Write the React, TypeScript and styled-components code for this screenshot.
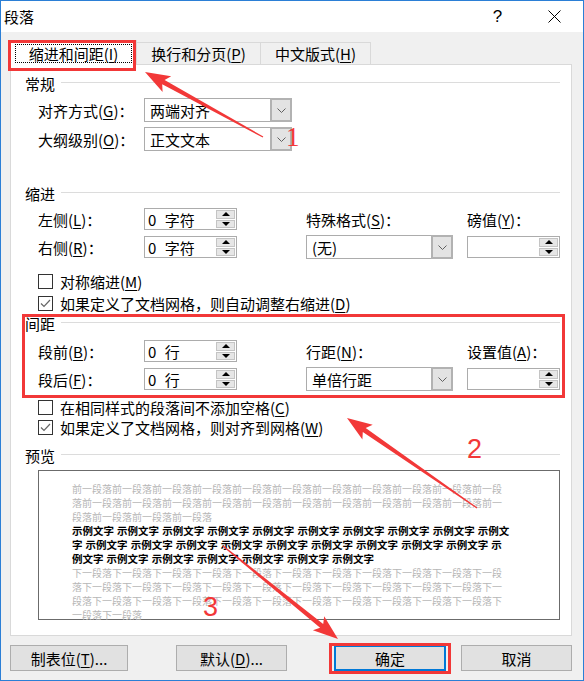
import React from 'react';
import styled, { createGlobalStyle, css } from 'styled-components';

const RED = '#f23838';
const FONT = '"Noto Sans CJK SC", "Liberation Sans", sans-serif';

const GlobalStyle = createGlobalStyle`
  * { box-sizing: border-box; }
  body { margin: 0; background: #fff; font-family: ${FONT}; }
  u { text-decoration: underline; text-underline-offset: 2px; text-decoration-thickness: 1px; }
`;

const Window = styled.div`
  position: relative;
  width: 584px;
  height: 681px;
  border: 1px solid #2b7fd6;
  background: #f0f0f0;
  font-size: 15px;
  line-height: 1;
  color: #000;
  display: flex;
  flex-direction: column;
`;

const TitleBar = styled.div`
  height: 31px;
  flex: none;
  background: #fff;
  display: flex;
  align-items: center;
  padding-left: 3px;
`;

const TitleText = styled.span`
  flex: 1;
`;

const TitleButton = styled.div`
  width: 57px;
  height: 31px;
  display: flex;
  align-items: center;
  justify-content: center;
  font-family: "Liberation Sans", sans-serif;
  font-size: 17px;
`;

const Body = styled.div`
  flex: 1;
  display: flex;
  flex-direction: column;
  padding: 8px 11px 0 9px;
`;

const TabStrip = styled.div`
  height: 24px;
  display: flex;
  align-items: flex-end;
`;

const Tab = styled.div<{ $w: number; $active?: boolean }>`
  position: relative;
  width: ${p => p.$w}px;
  height: 22px;
  display: flex;
  align-items: center;
  justify-content: center;
  border: 1px solid #d9d9d9;
  border-bottom: none;
  background: #f0f0f0;
  margin-left: -1px;

  ${p => p.$active && css`
    margin-left: 0;
    height: 25px;
    margin-bottom: -1px;
    background: #fff;
    z-index: 2;

    &::before {
      content: "";
      position: absolute;
      top: 3px;
      left: 4px;
      right: 4px;
      bottom: 2px;
      border: 1px dotted #000;
    }

    &::after {
      content: "";
      position: absolute;
      top: -1px;
      left: -3px;
      right: 0;
      bottom: -6px;
      border: 3px solid ${RED};
    }
  `}
`;

const Panel = styled.div`
  height: 572px;
  border: 1px solid #d9d9d9;
  background: #fff;
  padding: 9px 11px 0 14px;
  display: flex;
  flex-direction: column;
`;

const Group = styled.div<{ $top?: number; $marked?: boolean }>`
  position: relative;
  margin-top: ${p => p.$top ?? 0}px;

  ${p => p.$marked && css`
    &::after {
      content: "";
      position: absolute;
      top: 0;
      left: -3px;
      right: -5px;
      bottom: -7px;
      border: 3px solid ${RED};
      z-index: 1;
      pointer-events: none;
    }
  `}
`;

const GroupHeader = styled.div`
  height: 18px;
  display: flex;
  align-items: center;
  gap: 6px;

  &::after {
    content: "";
    flex: 1;
    height: 1px;
    margin-top: -2px;
    background: #dcdcdc;
  }
`;

const FieldRows = styled.div`
  margin-top: 6px;
  display: flex;
  flex-direction: column;
  gap: 5px;
`;

const FieldRow = styled.div`
  display: grid;
  grid-template-columns: 106px 148px;
  height: 24px;
  align-items: center;
  padding-left: 13px;
`;

const FieldGrid = styled.div<{ $top: number }>`
  margin-top: ${p => p.$top}px;
  padding-left: 13px;
  display: grid;
  grid-template-columns: 106px 162px 161px 93px;
  grid-template-rows: 22px 24px;
  row-gap: 5px;
  align-items: center;
`;

const Label = styled.span`
  white-space: nowrap;
`;

const ComboBox = styled.div<{ $w: number }>`
  width: ${p => p.$w}px;
  height: 24px;
  display: flex;
  border: 1px solid #acacac;
  background: #fff;
`;

const ComboValue = styled.span`
  flex: 1;
  display: flex;
  align-items: center;
  padding-left: 5px;
`;

const ComboArrow = styled.span`
  width: 22px;
  margin: -1px -1px -1px 0;
  border: 2px solid #b2b2b2;
  background: #e3e3e3;
  display: flex;
  align-items: center;
  justify-content: center;
`;

const SpinBox = styled.div`
  width: 93px;
  height: 22px;
  border: 1px solid #acacac;
  background: #fff;
  display: flex;
  padding: 1px;
`;

const SpinValue = styled.span`
  flex: 1;
  display: flex;
  align-items: center;
  padding-left: 2px;
  word-spacing: 5px;
`;

const SpinButtons = styled.div`
  width: 19px;
  display: flex;
  flex-direction: column;
  gap: 1px;
`;

const SpinButton = styled.div<{ $dir: 'up' | 'down' }>`
  flex: 1;
  background: #e6e6e6;
  border: 1px solid #c4c4c4;
  display: flex;
  align-items: center;
  justify-content: center;

  &::before {
    content: "";
    border-left: 4px solid transparent;
    border-right: 4px solid transparent;
    ${p => p.$dir === 'up'
      ? css`border-bottom: 4px solid #000;`
      : css`border-top: 4px solid #000;`}
  }
`;

const CheckList = styled.div<{ $top: number }>`
  margin-top: ${p => p.$top}px;
  display: flex;
  flex-direction: column;
`;

const CheckRow = styled.div<{ $h: number }>`
  height: ${p => p.$h}px;
  display: flex;
  align-items: center;
  gap: 7px;
  padding-left: 13px;
  white-space: nowrap;
`;

const CheckBox = styled.span`
  width: 15px;
  height: 15px;
  flex: none;
  border: 1px solid #333;
  background: #fff;
  display: flex;
  align-items: center;
  justify-content: center;
`;

const PreviewBox = styled.div`
  margin: 6px 0 0 13px;
  height: 150px;
  border: 1px solid #6b6b6b;
  background: #fff;
  padding: 11px 0 0 33px;
  font-size: 10px;
  line-height: 14px;
`;

const PreviewLine = styled.div<{ $sample?: boolean }>`
  white-space: nowrap;
  height: 14px;
  color: #b6b6b6;

  ${p => p.$sample && css`
    color: #000;
    font-size: 10.5px;
    font-weight: 700;
    word-spacing: 0.7px;
  `}
`;

const Footer = styled.div`
  margin-top: 9px;
  height: 26px;
  display: flex;
`;

const Button = styled.div<{ $w: number; $gap?: number; $default?: boolean }>`
  position: relative;
  width: ${p => p.$w}px;
  margin-left: ${p => p.$gap ?? 0}px;
  display: flex;
  align-items: center;
  justify-content: center;
  background: #e1e1e1;
  border: 1px solid #adadad;
  white-space: nowrap;

  ${p => p.$default && css`
    border-color: #0078d7;
    box-shadow: inset 0 0 0 1px #0078d7;

    &::after {
      content: "";
      position: absolute;
      top: -3px;
      left: -6px;
      right: -6px;
      bottom: -4px;
      border: 3px solid ${RED};
    }
  `}
`;

const Annotations = styled.svg`
  position: absolute;
  top: -1px;
  left: -1px;
  width: 584px;
  height: 681px;
  pointer-events: none;
  z-index: 5;
`;

function arrow(tx: number, ty: number, hx: number, hy: number) {
  const head = 21, barb = 9, neck = 5, tail = 1.2, sweep = 4;
  const dx = hx - tx, dy = hy - ty;
  const len = Math.hypot(dx, dy);
  const ux = dx / len, uy = dy / len;
  const nx = -uy, ny = ux;
  const bx = hx - ux * head, by = hy - uy * head;
  const pts = [
    [tx + nx * tail / 2, ty + ny * tail / 2],
    [bx + nx * neck / 2, by + ny * neck / 2],
    [bx - ux * sweep + nx * barb, by - uy * sweep + ny * barb],
    [hx, hy],
    [bx - ux * sweep - nx * barb, by - uy * sweep - ny * barb],
    [bx - nx * neck / 2, by - ny * neck / 2],
    [tx - nx * tail / 2, ty - ny * tail / 2],
  ];
  return pts.map(p => p.map(v => v.toFixed(1)).join(',')).join(' ');
}

const Chevron = () => (
  <svg width="9" height="5" viewBox="0 0 9 5">
    <polyline points="0.5,0.5 4.5,4.5 8.5,0.5" fill="none" stroke="#606060" strokeWidth="1" />
  </svg>
);

const Tick = () => (
  <svg width="13" height="13" viewBox="0 0 13 13">
    <polyline points="2,6.5 5,9.5 11,3" fill="none" stroke="#666" strokeWidth="1.2" />
  </svg>
);

function Combo({ w, value }: { w: number; value: string }) {
  return (
    <ComboBox $w={w}>
      <ComboValue>{value}</ComboValue>
      <ComboArrow><Chevron /></ComboArrow>
    </ComboBox>
  );
}

function Spin({ value }: { value: string }) {
  return (
    <SpinBox>
      <SpinValue>{value}</SpinValue>
      <SpinButtons>
        <SpinButton $dir="up" />
        <SpinButton $dir="down" />
      </SpinButtons>
    </SpinBox>
  );
}

function Check({ checked, h, children }: { checked?: boolean; h: number; children: React.ReactNode }) {
  return (
    <CheckRow $h={h}>
      <CheckBox>{checked && <Tick />}</CheckBox>
      <span>{children}</span>
    </CheckRow>
  );
}

const before = [
  '前一段落'.repeat(10) + '前一段',
  '落' + '前一段落'.repeat(10) + '前一',
  '段落' + '前一段落'.repeat(3),
];
const sample = [
  '示例文字 '.repeat(9) + '示例文',
  '字 ' + '示例文字 '.repeat(9) + '示',
  '例文字 ' + Array(6).fill('示例文字').join(' '),
];
const after = [
  '下一段落'.repeat(10) + '下一段',
  '落' + '下一段落'.repeat(10) + '下一',
  '段落' + '下一段落'.repeat(10) + '下',
  '一段落下一段落',
];

export default function App() {
  return (
    <>
      <GlobalStyle />
      <Window>
        <TitleBar>
          <TitleText>段落</TitleText>
          <TitleButton>?</TitleButton>
          <TitleButton>
            <svg width="13" height="13" viewBox="0 0 13 13">
              <path d="M0.5 0.5 L12.5 12.5 M12.5 0.5 L0.5 12.5" stroke="#000" strokeWidth="1" />
            </svg>
          </TitleButton>
        </TitleBar>

        <Body>
          <TabStrip>
            <Tab $w={127} $active>缩进和间距(<u>I</u>)</Tab>
            <Tab $w={125}>换行和分页(<u>P</u>)</Tab>
            <Tab $w={111}>中文版式(<u>H</u>)</Tab>
          </TabStrip>

          <Panel>
            <Group>
              <GroupHeader>常规</GroupHeader>
              <FieldRows>
                <FieldRow>
                  <Label>对齐方式(<u>G</u>)：</Label>
                  <Combo w={148} value="两端对齐" />
                </FieldRow>
                <FieldRow>
                  <Label>大纲级别(<u>O</u>)：</Label>
                  <Combo w={148} value="正文文本" />
                </FieldRow>
              </FieldRows>
            </Group>

            <Group $top={33}>
              <GroupHeader>缩进</GroupHeader>
              <FieldGrid $top={6}>
                <Label>左侧(<u>L</u>)：</Label>
                <Spin value="0 字符" />
                <Label>特殊格式(<u>S</u>)：</Label>
                <Label>磅值(<u>Y</u>)：</Label>
                <Label>右侧(<u>R</u>)：</Label>
                <Spin value="0 字符" />
                <Combo w={147} value="(无)" />
                <Spin value="" />
              </FieldGrid>
            </Group>

            <CheckList $top={11}>
              <Check h={22}>对称缩进(<u>M</u>)</Check>
              <Check h={22} checked>如果定义了文档网格，则自动调整右缩进(<u>D</u>)</Check>
            </CheckList>

            <Group $marked>
              <GroupHeader>间距</GroupHeader>
              <FieldGrid $top={8}>
                <Label>段前(<u>B</u>)：</Label>
                <Spin value="0 行" />
                <Label>行距(<u>N</u>)：</Label>
                <Label>设置值(<u>A</u>)：</Label>
                <Label>段后(<u>F</u>)：</Label>
                <Spin value="0 行" />
                <Combo w={147} value="单倍行距" />
                <Spin value="" />
              </FieldGrid>
            </Group>

            <CheckList $top={6}>
              <Check h={20}>在相同样式的段落间不添加空格(<u>C</u>)</Check>
              <Check h={20} checked>如果定义了文档网格，则对齐到网格(<u>W</u>)</Check>
            </CheckList>

            <Group $top={9}>
              <GroupHeader>预览</GroupHeader>
              <PreviewBox>
                {before.map((t, i) => <PreviewLine key={'b' + i}>{t}</PreviewLine>)}
                {sample.map((t, i) => <PreviewLine key={'s' + i} $sample>{t}</PreviewLine>)}
                {after.map((t, i) => <PreviewLine key={'a' + i}>{t}</PreviewLine>)}
              </PreviewBox>
            </Group>
          </Panel>

          <Footer>
            <Button $w={118}>制表位(<u>T</u>)...</Button>
            <Button $w={111} $gap={48}>默认(<u>D</u>)...</Button>
            <Button $w={112} $gap={47} $default>确定</Button>
            <Button $w={111} $gap={15}>取消</Button>
          </Footer>
        </Body>

        <Annotations viewBox="0 0 584 681">
          <polygon points={arrow(263, 137, 145, 72)} fill={RED} />
          <polygon points={arrow(477, 508, 347, 418)} fill={RED} />
          <polygon points={arrow(223, 546, 338, 639)} fill={RED} />
          <text x="286" y="146" fontFamily='"Liberation Serif", serif' fontSize="27" fill={RED}>1</text>
          <text x="467" y="458" fontFamily='"Liberation Sans", sans-serif' fontSize="27" fill={RED}>2</text>
          <text x="203" y="616" fontFamily='"Liberation Sans", sans-serif' fontSize="27" fill={RED}>3</text>
        </Annotations>
      </Window>
    </>
  );
}
